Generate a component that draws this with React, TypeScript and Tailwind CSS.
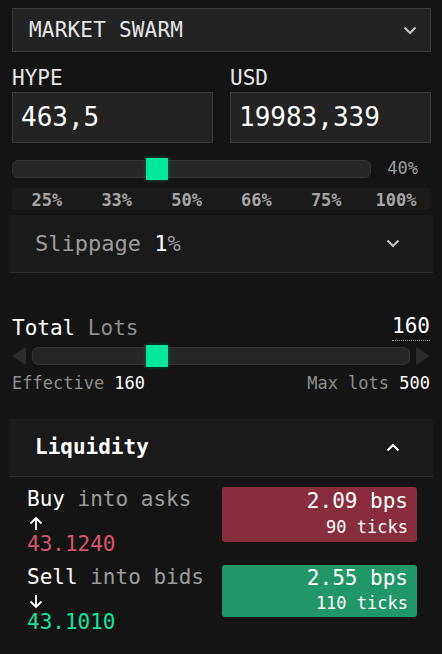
import React from "react";

const MONO = "font-['DejaVu_Sans_Mono','Liberation_Mono',monospace]";

function Chevron({ up = false, className = "" }: { up?: boolean; className?: string }) {
  return (
    <svg width="14" height="9" viewBox="0 0 14 9" className={className}>
      <polyline
        points={up ? "1.5,7.5 7,2 12.5,7.5" : "1.5,1.5 7,7 12.5,1.5"}
        fill="none"
        stroke="currentColor"
        strokeWidth="2.2"
      />
    </svg>
  );
}

function Arrow({ down = false }: { down?: boolean }) {
  return (
    <svg width="16" height="15" viewBox="0 0 16 15" className="text-white ml-[1px]">
      {down ? (
        <path d="M8 1 V13 M2.5 7.5 L8 13 L13.5 7.5" fill="none" stroke="currentColor" strokeWidth="1.8" />
      ) : (
        <path d="M8 14 V2 M2.5 7.5 L8 2 L13.5 7.5" fill="none" stroke="currentColor" strokeWidth="1.8" />
      )}
    </svg>
  );
}

export default function App() {
  const pcts = ["25%", "33%", "50%", "66%", "75%", "100%"];

  return (
    <div className={`w-[442px] h-[654px] overflow-hidden bg-[#141414] ${MONO} text-[#e6e6e6]`}>
      <div className="pl-3 pr-[11px] pt-2">
        {/* Market select */}
        <div className="h-[44px] flex items-center justify-between border border-[#3a3a3a] bg-[#232323] pl-4 pr-[13px]">
          <span className="text-[21px] leading-none tracking-[0.2px]">MARKET SWARM</span>
          <Chevron className="text-[#c4c4c4]" />
        </div>

        {/* Amount inputs */}
        <div className="grid grid-cols-2 gap-[17px] mt-[14px]">
          <div>
            <div className="text-[21px] leading-[24px]">HYPE</div>
            <div className="mt-[2px] h-[51px] flex items-center border border-[#3a3a3a] bg-[#232323] pl-2 text-[26px] text-white">
              463,5
            </div>
          </div>
          <div>
            <div className="text-[21px] leading-[24px]">USD</div>
            <div className="mt-[2px] h-[51px] flex items-center border border-[#3a3a3a] bg-[#232323] pl-2 text-[26px] text-white">
              19983,339
            </div>
          </div>
        </div>

        {/* Size slider */}
        <div className="mt-[15px] flex items-center h-[22px]">
          <div className="relative w-[359px] h-[18px] rounded-md border border-[#333333] bg-[#262626]">
            <div className="absolute left-[133px] top-[-3px] w-[22px] h-[22px] bg-[#00e99a] shadow-[0_0_4px_rgba(0,233,154,0.35)]" />
          </div>
          <span className="ml-auto mr-[13px] text-[17px] text-[#9c9c9c]">40%</span>
        </div>

        <div className="mt-[8px] h-[22px] grid grid-cols-6 items-center rounded bg-[#1a1a1a] text-center text-[17px] font-bold text-[#a6a6a6]">
          {pcts.map((p) => (
            <span key={p}>{p}</span>
          ))}
        </div>
      </div>

      {/* Slippage */}
      <div className="mx-[9px] mt-[5px] h-[58px] flex items-center justify-between bg-[#1a1a1a] border-b border-[#2c2c2c] pl-[26px] pr-[33px]">
        <span className="text-[22px] text-[#9c9c9c]">
          Slippage <span className="text-white">1</span>%
        </span>
        <Chevron className="text-[#c4c4c4]" />
      </div>

      {/* Total lots */}
      <div className="px-3 mt-[40px]">
        <div className="flex items-end justify-between">
          <span className="text-[21px] leading-[26px] text-white">
            Total <span className="text-[#8e8e8e]">Lots</span>
          </span>
          <span className="text-[21px] leading-[26px] text-white border-b border-dotted border-[#9a9a9a] pb-[1px]">160</span>
        </div>
        <div className="mt-[4px] flex items-center h-[22px] gap-[6px]">
          <svg width="14" height="18" viewBox="0 0 14 18">
            <polygon points="14,0 0,9 14,18" fill="#2b2b2b" />
          </svg>
          <div className="relative flex-1 h-[18px] rounded-md border border-[#333333] bg-[#262626]">
            <div className="absolute left-[113px] top-[-3px] w-[22px] h-[22px] bg-[#00e99a] shadow-[0_0_4px_rgba(0,233,154,0.35)]" />
          </div>
          <svg width="14" height="18" viewBox="0 0 14 18">
            <polygon points="0,0 14,9 0,18" fill="#2b2b2b" />
          </svg>
        </div>
        <div className="mt-[5px] flex justify-between text-[17px] leading-[22px] text-[#8e8e8e]">
          <span>
            Effective <span className="text-white">160</span>
          </span>
          <span>
            Max lots <span className="text-white">500</span>
          </span>
        </div>
      </div>

      {/* Liquidity */}
      <div className="mx-[9px] mt-[25px] h-[58px] flex items-center justify-between bg-[#1a1a1a] border-b border-[#2c2c2c] pl-[26px] pr-[33px]">
        <span className="text-[21px] font-bold text-white">Liquidity</span>
        <Chevron up className="text-white" />
      </div>

      <div className="pl-[27px] pr-[25px] mt-[10px] flex flex-col gap-[10px]">
        <div className="flex justify-between">
          <div className="text-[21px] leading-[24px]">
            <div className="text-white">
              Buy <span className="text-[#9c9c9c]">into asks</span>
            </div>
            <div className="h-[20px] flex items-center mt-[2px]">
              <Arrow />
            </div>
            <div className="text-[#d4566d] leading-[22px]">43.1240</div>
          </div>
          <div className="w-[195px] h-[55px] rounded-[3px] bg-[#882d3e] flex flex-col items-end pr-[9px] pt-[1px] text-white">
            <span className="text-[21px] leading-[26px]">2.09 bps</span>
            <span className="text-[17px] leading-[24px] mt-[1px]">90 ticks</span>
          </div>
        </div>
        <div className="flex justify-between">
          <div className="text-[21px] leading-[24px]">
            <div className="text-white">
              Sell <span className="text-[#9c9c9c]">into bids</span>
            </div>
            <div className="h-[20px] flex items-center mt-[2px]">
              <Arrow down />
            </div>
            <div className="text-[#17e39b] leading-[22px]">43.1010</div>
          </div>
          <div className="w-[195px] h-[52px] rounded-[3px] bg-[#219669] flex flex-col items-end pr-[9px] text-white">
            <span className="text-[21px] leading-[26px]">2.55 bps</span>
            <span className="text-[17px] leading-[24px]">110 ticks</span>
          </div>
        </div>
      </div>
    </div>
  );
}
